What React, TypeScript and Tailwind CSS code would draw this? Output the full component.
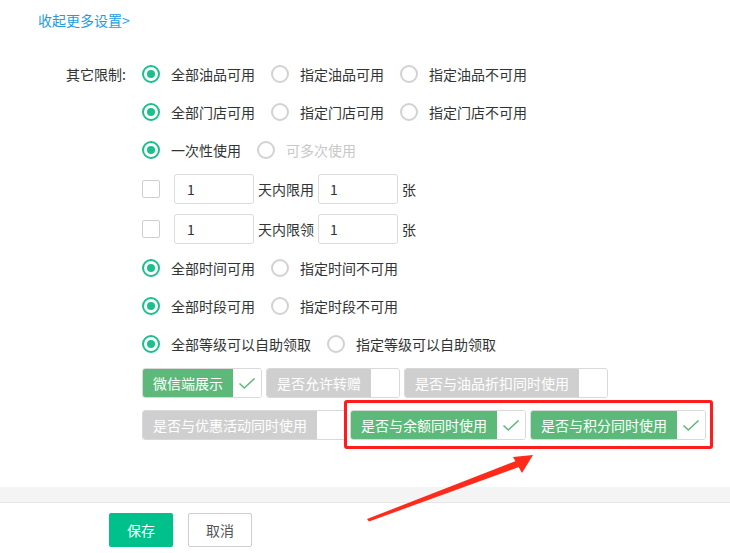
import * as React from "react";

type Option = { label: string; checked?: boolean; disabled?: boolean };

const radioRows: Option[][] = [
  [{ label: "全部油品可用", checked: true }, { label: "指定油品可用" }, { label: "指定油品不可用" }],
  [{ label: "全部门店可用", checked: true }, { label: "指定门店可用" }, { label: "指定门店不可用" }],
  [{ label: "一次性使用", checked: true }, { label: "可多次使用", disabled: true }],
];

const lowerRows: Option[][] = [
  [{ label: "全部时间可用", checked: true }, { label: "指定时间不可用" }],
  [{ label: "全部时段可用", checked: true }, { label: "指定时段不可用" }],
  [{ label: "全部等级可以自助领取", checked: true }, { label: "指定等级可以自助领取" }],
];

const toggles = [
  { label: "微信端展示", on: true },
  { label: "是否允许转赠", on: false },
  { label: "是否与油品折扣同时使用", on: false },
  { label: "是否与优惠活动同时使用", on: false },
  { label: "是否与余额同时使用", on: true },
  { label: "是否与积分同时使用", on: true },
];

function Radio({ option }: { option: Option }) {
  return (
    <label className="flex items-center mr-[16px] cursor-pointer select-none">
      <span
        className={
          option.checked
            ? "w-[18px] h-[18px] rounded-full border-[2px] border-[#1bc08c] flex items-center justify-center"
            : "w-[18px] h-[18px] rounded-full border-[2px] border-[#d2d2d2]"
        }
      >
        {option.checked && <span className="w-[8px] h-[8px] rounded-full bg-[#1bc08c]" />}
      </span>
      <span className={option.disabled ? "ml-[11px] text-[#c8c8c8]" : "ml-[11px] text-[#333]"}>
        {option.label}
      </span>
    </label>
  );
}

function RadioRow({ options }: { options: Option[] }) {
  return (
    <div className="h-[38px] flex items-center">
      {options.map((o) => (
        <Radio key={o.label} option={o} />
      ))}
    </div>
  );
}

function LimitRow({ text }: { text: string }) {
  return (
    <div className="h-[40px] flex items-center">
      <span className="w-[18px] h-[18px] rounded-[2px] border border-[#cfcfcf] bg-white" />
      <input
        defaultValue="1"
        className="ml-[14px] w-[80px] h-[30px] rounded-[3px] border border-[#dcdcdc] px-[12px] text-[#333] outline-none"
      />
      <span className="ml-[4px] mr-[4px] text-[#333]">{text}</span>
      <input
        defaultValue="1"
        className="w-[80px] h-[30px] rounded-[3px] border border-[#dcdcdc] px-[11px] text-[#333] outline-none"
      />
      <span className="ml-[4px] text-[#333]">张</span>
    </div>
  );
}

function Toggle({ label, on }: { label: string; on: boolean }) {
  return (
    <div className="flex h-[30px] rounded-[3px] border border-[#d9d9d9] overflow-hidden">
      <span
        className={
          on
            ? "px-[10px] flex items-center bg-[#5db97a] text-white"
            : "px-[10px] flex items-center bg-[#cfcfcf] text-white"
        }
      >
        {label}
      </span>
      <span className="w-[28px] bg-white flex items-center justify-center">
        {on && (
          <svg width="18" height="13" viewBox="0 0 18 13" fill="none">
            <path d="M1.5 6.5 L6.3 11 L16.5 1.5" stroke="#5db97a" strokeWidth="1.6" />
          </svg>
        )}
      </span>
    </div>
  );
}

export default function App() {
  return (
    <div
      className="relative w-[730px] h-[553px] overflow-hidden bg-white text-[14px] leading-[20px]"
      style={{ fontFamily: '"Noto Sans CJK SC", "Noto Sans", sans-serif' }}
    >
      <div className="pt-[10px] pl-[38px]">
        <a className="text-[#1b9de2] cursor-pointer">收起更多设置&gt;</a>
      </div>

      <div className="mt-[25px] flex">
        <div className="w-[142px] pr-[16px] h-[38px] flex items-center justify-end text-[#333]">
          其它限制:
        </div>
        <div className="flex flex-col">
          {radioRows.map((r, i) => (
            <RadioRow key={i} options={r} />
          ))}
          <LimitRow text="天内限用" />
          <LimitRow text="天内限领" />
          {lowerRows.map((r, i) => (
            <RadioRow key={i} options={r} />
          ))}
          <div className="mt-[5px] w-[580px] flex flex-wrap gap-x-[4px] gap-y-[12px]">
            {toggles.map((t) => (
              <Toggle key={t.label} label={t.label} on={t.on} />
            ))}
          </div>
        </div>
      </div>

      <div className="mt-[47px] h-[16px] bg-[#f4f4f4] border-b border-[#e6e6e6]" />

      <div className="mt-[10px] pl-[109px] flex gap-[15px]">
        <button className="w-[64px] h-[34px] rounded-[2px] bg-[#00c18b] text-white">保存</button>
        <button className="w-[64px] h-[34px] rounded-[2px] border border-[#cfcfcf] bg-white text-[#555]">
          取消
        </button>
      </div>

      {/* annotation overlay */}
      <div className="absolute left-[344px] top-[400px] w-[369px] h-[49px] rounded-[3px] border-[3px] border-[#ff1c1c] pointer-events-none" />
      <svg className="absolute left-0 top-0 pointer-events-none" width="730" height="553" viewBox="0 0 730 553">
        <polygon points="367,519 369,521.5 519,467 516,461" fill="#ff2a1a" />
        <polygon points="533,455 513,457 522,473" fill="#ff2a1a" />
      </svg>
    </div>
  );
}
